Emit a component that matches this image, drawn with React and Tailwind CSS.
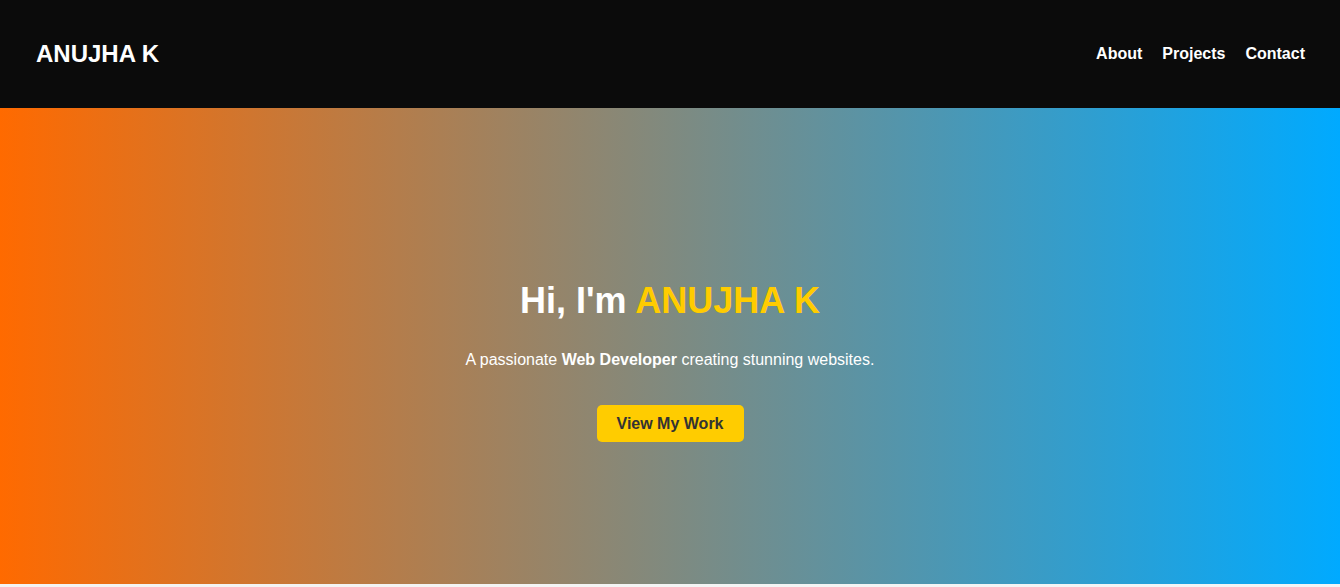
export default function App() {
  return (
    <div className="min-h-screen bg-[#f4f4f4] font-['Liberation_Sans',Arial,sans-serif]">
      <header className="flex h-[108px] items-center justify-between bg-[#0b0b0b] pl-9 pr-[35px] text-white">
        <h1 className="text-[24px] font-bold">ANUJHA K</h1>
        <nav className="flex gap-5 text-[16px] font-bold">
          <a href="#about">About</a>
          <a href="#projects">Projects</a>
          <a href="#contact">Contact</a>
        </nav>
      </header>

      <section className="flex h-[476px] flex-col items-center justify-center bg-[linear-gradient(to_right,#ff6a00,#00aaff)] pt-6 text-center text-white">
        <h2 className="text-[36px] font-bold">
          Hi, I'm <span className="text-[#ffcc00]">ANUJHA K</span>
        </h2>
        <p className="mt-5 text-[16px]">
          A passionate <strong>Web Developer</strong> creating stunning websites.
        </p>
        <button className="mt-[33px] rounded-[5px] bg-[#ffcc00] px-5 py-[10px] text-[16px] leading-[17px] font-bold text-[#333]">
          View My Work
        </button>
      </section>
    </div>
  );
}
